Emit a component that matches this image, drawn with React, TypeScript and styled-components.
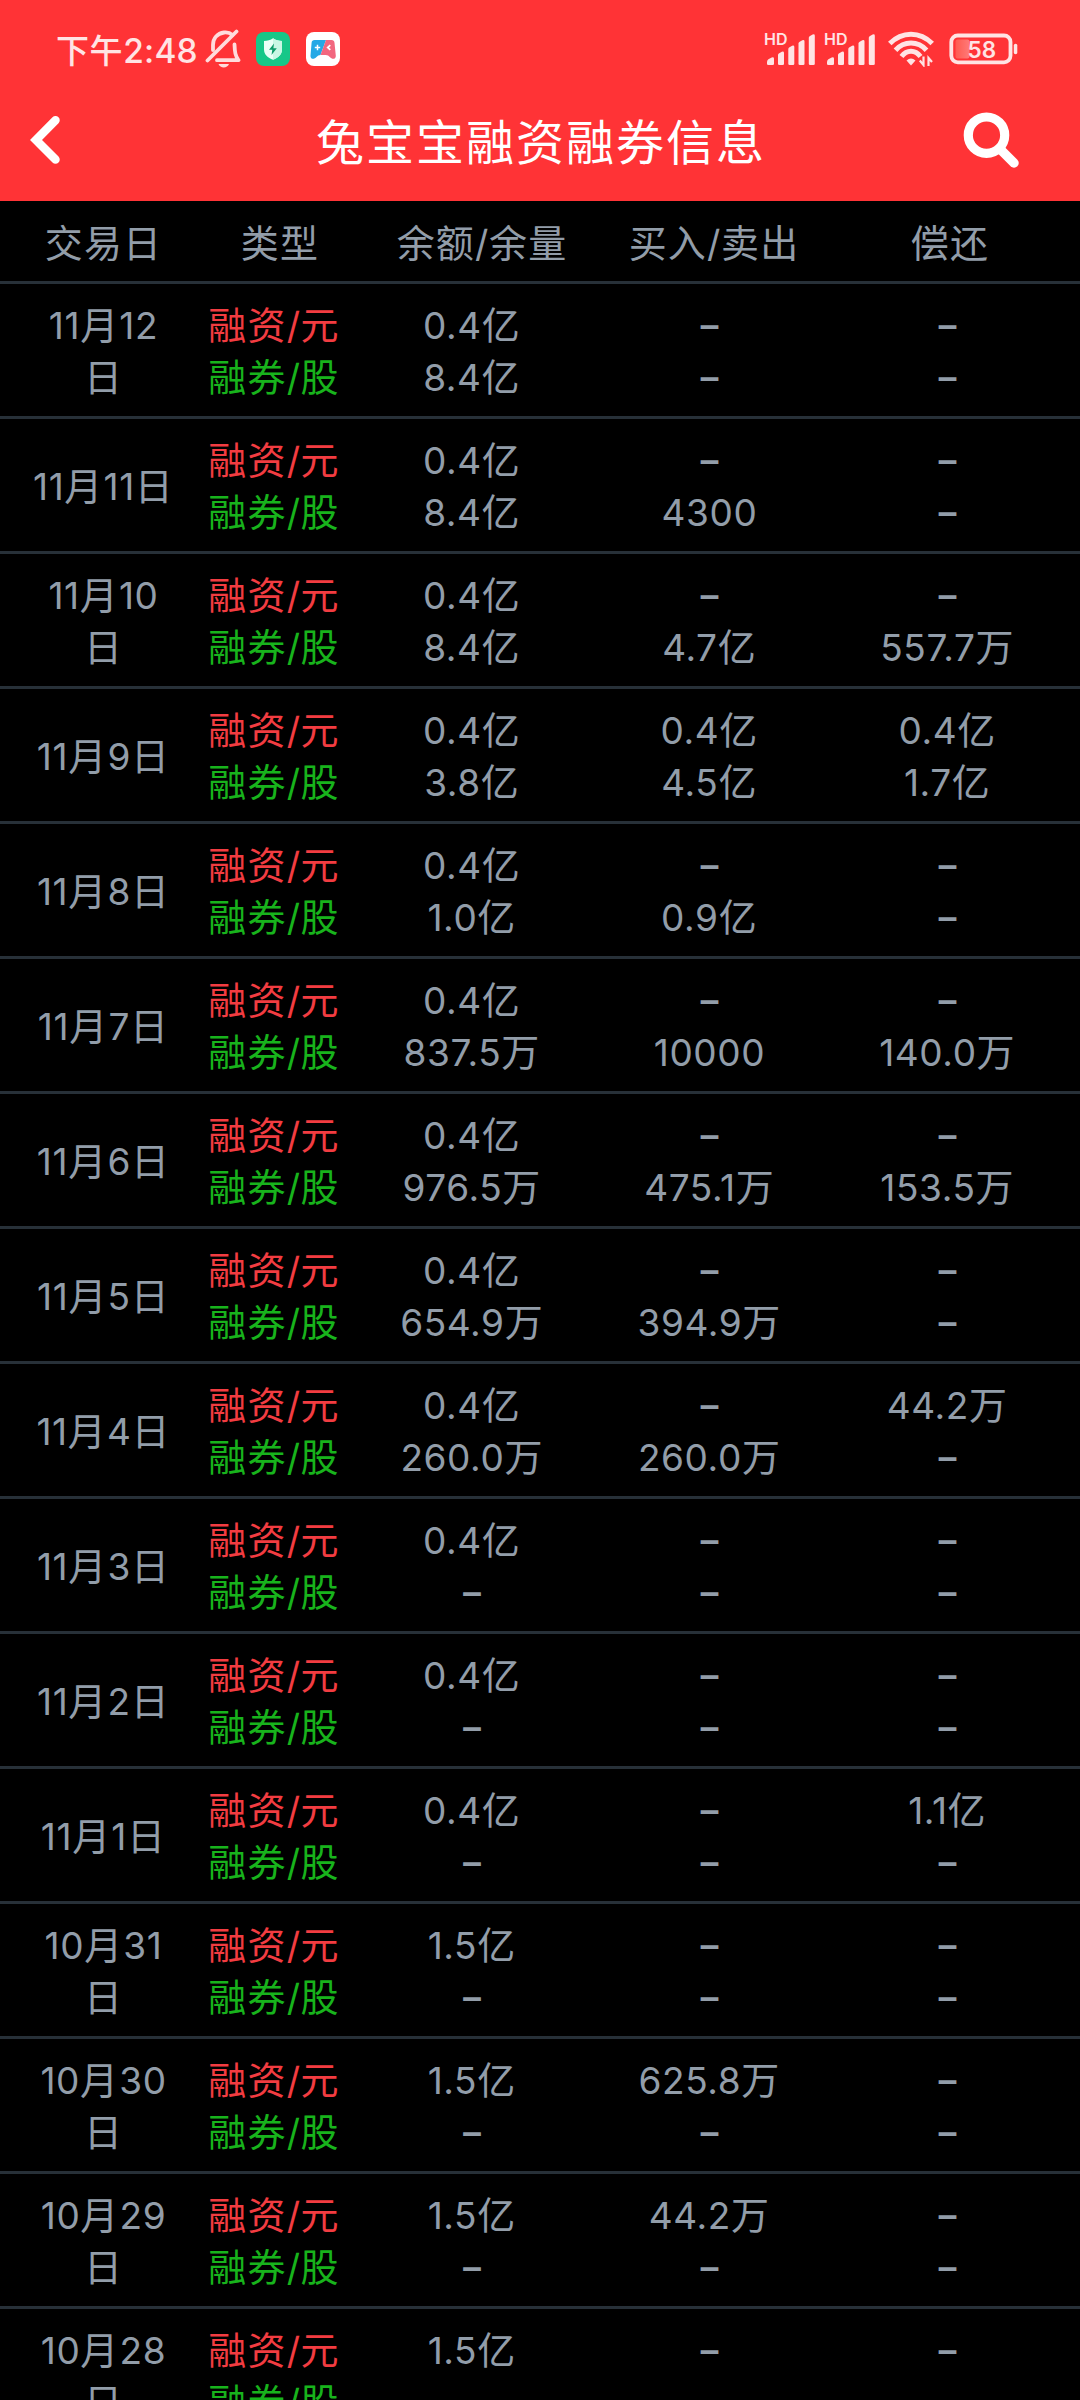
import React from "react";
import styled, { createGlobalStyle } from "styled-components";

const GlobalStyle = createGlobalStyle`
  html, body {
    margin: 0;
    padding: 0;
    background: #000;
    overflow: hidden;
  }
  * { box-sizing: border-box; }
`;

const Screen = styled.div`
  width: 1080px;
  height: 2400px;
  overflow: hidden;
  display: flex;
  flex-direction: column;
  background: #000;
  color: #929da9;
  font-family: "Noto Sans CJK SC", sans-serif;
`;

const TopArea = styled.header`
  flex: none;
  height: 201px;
  background: #ff3336;
  color: #fff;
`;

const StatusBar = styled.div`
  display: flex;
  align-items: center;
  justify-content: space-between;
  height: 98px;
  padding: 0 62px 0 56px;
`;

const StatusGroup = styled.div`
  display: flex;
  align-items: center;
`;

const Clock = styled.div`
  width: 149px;
  padding-bottom: 1px;
  color: #ffe4e4;
  font-size: 33px;
  line-height: 48px;
  font-weight: 500;
  white-space: nowrap;
  letter-spacing: 0.6px;
`;

const Glyph = styled.svg<{ $gap?: number }>`
  display: block;
  flex: none;
  margin-left: ${(p) => p.$gap ?? 0}px;
`;

const SignalLabel = styled.text`
  font-family: Inter, sans-serif;
  font-size: 16px;
  font-weight: 600;
`;

const BatteryLabel = styled.text`
  font-family: Inter, sans-serif;
  font-size: 22.5px;
  font-weight: 600;
`;

const TitleBar = styled.div`
  display: grid;
  grid-template-columns: 120px 1fr 120px;
  align-items: center;
  height: 84px;
`;

const Title = styled.h1`
  margin: 0;
  padding: 0 0 3px 2px;
  font-size: 48px;
  line-height: 70px;
  font-weight: 400;
  letter-spacing: 2px;
  text-align: center;
  white-space: nowrap;
`;

const IconButton = styled.button<{ $left: number }>`
  display: flex;
  padding: 0 0 0 ${(p) => p.$left}px;
  border: 0;
  background: none;
`;

const HeaderRow = styled.div`
  flex: none;
  display: grid;
  grid-template-columns: 175px 178px 226px 238px 234px;
  align-items: center;
  height: 83px;
  padding: 0 13px 1px 16px;
  border-bottom: 3px solid #273038;
`;

const HeaderCell = styled.div`
  font-size: 38px;
  line-height: 52px;
  letter-spacing: 1.2px;
  text-align: center;
  white-space: nowrap;
`;

const Row = styled.div`
  flex: none;
  display: grid;
  grid-template-columns: 175px 166px 230px 245px 231px;
  align-items: center;
  height: 135px;
  padding: 0 15px 2px 16px;
  border-bottom: 3px solid #273038;
`;

const Cell = styled.div`
  display: flex;
  flex-direction: column;
  align-items: center;
`;

const Line = styled.div<{ $color?: string }>`
  height: 52px;
  font-size: 38px;
  line-height: 52px;
  letter-spacing: 1.2px;
  white-space: nowrap;
  color: ${(p) => p.$color ?? "inherit"};
`;

const Digits = styled.span<{ $size: number }>`
  font-family: Inter, sans-serif;
  font-size: ${(p) => p.$size}px;
  line-height: 1;
  letter-spacing: 0.6px;
`;

const ClockDigits = styled(Digits)`
  letter-spacing: 0.2px;
`;

const Dash = styled.span`
  display: block;
  font-family: "Noto Sans", sans-serif;
  font-size: 42px;
  line-height: 49px;
  font-weight: 500;
  letter-spacing: 0;
`;

type Pair = [string, string];
type Record = { date: string[]; balance: Pair; buy: Pair; repay: Pair };

const records: Record[] = [
  { date: ["11月12", "日"], balance: ["0.4亿", "8.4亿"], buy: ["–", "–"], repay: ["–", "–"] },
  { date: ["11月11日"], balance: ["0.4亿", "8.4亿"], buy: ["–", "4300"], repay: ["–", "–"] },
  { date: ["11月10", "日"], balance: ["0.4亿", "8.4亿"], buy: ["–", "4.7亿"], repay: ["–", "557.7万"] },
  { date: ["11月9日"], balance: ["0.4亿", "3.8亿"], buy: ["0.4亿", "4.5亿"], repay: ["0.4亿", "1.7亿"] },
  { date: ["11月8日"], balance: ["0.4亿", "1.0亿"], buy: ["–", "0.9亿"], repay: ["–", "–"] },
  { date: ["11月7日"], balance: ["0.4亿", "837.5万"], buy: ["–", "10000"], repay: ["–", "140.0万"] },
  { date: ["11月6日"], balance: ["0.4亿", "976.5万"], buy: ["–", "475.1万"], repay: ["–", "153.5万"] },
  { date: ["11月5日"], balance: ["0.4亿", "654.9万"], buy: ["–", "394.9万"], repay: ["–", "–"] },
  { date: ["11月4日"], balance: ["0.4亿", "260.0万"], buy: ["–", "260.0万"], repay: ["44.2万", "–"] },
  { date: ["11月3日"], balance: ["0.4亿", "–"], buy: ["–", "–"], repay: ["–", "–"] },
  { date: ["11月2日"], balance: ["0.4亿", "–"], buy: ["–", "–"], repay: ["–", "–"] },
  { date: ["11月1日"], balance: ["0.4亿", "–"], buy: ["–", "–"], repay: ["1.1亿", "–"] },
  { date: ["10月31", "日"], balance: ["1.5亿", "–"], buy: ["–", "–"], repay: ["–", "–"] },
  { date: ["10月30", "日"], balance: ["1.5亿", "–"], buy: ["625.8万", "–"], repay: ["–", "–"] },
  { date: ["10月29", "日"], balance: ["1.5亿", "–"], buy: ["44.2万", "–"], repay: ["–", "–"] },
  { date: ["10月28", "日"], balance: ["1.5亿", "–"], buy: ["–", "–"], repay: ["–", "–"] },
];

/** Sets figures in the Latin face and leaves the Chinese characters in the base face. */
function Mixed({ text, size = 37 }: { text: string; size?: number }) {
  return (
    <>
      {text.split(/([\d.:/]+)/).map((part, i) =>
        /^[\d.:/]+$/.test(part) ? (
          <Digits key={i} $size={size}>{part}</Digits>
        ) : (
          part
        )
      )}
    </>
  );
}

function Value({ text }: { text: string }) {
  return <Line>{text === "–" ? <Dash>–</Dash> : <Mixed text={text} />}</Line>;
}

function Values({ pair }: { pair: Pair }) {
  return (
    <Cell>
      <Value text={pair[0]} />
      <Value text={pair[1]} />
    </Cell>
  );
}

function MutedBell() {
  return (
    <Glyph width="36" height="40" viewBox="205 30 36 40" fill="none" stroke="#ffdcdc" strokeWidth="3.8" strokeLinecap="round" strokeLinejoin="round">
      <path d="M213 51V46c0-7 4.500-11.500 11-12.500 3.500-.5 6.500.8 8.500 2.500" />
      <path d="M234.500 45.500c.3 8 .8 11 4 15.700H217" />
      <path d="M236.500 32.500 207.500 61.500" />
      <path d="M218.500 65h10.500c-1.500 4.500-9 4.500-10.500 0Z" fill="#ffdcdc" stroke="none" />
    </Glyph>
  );
}

function SecurityIcon() {
  return (
    <Glyph width="34" height="34" viewBox="0 0 34 34" $gap={15}>
      <rect width="34" height="34" rx="8" fill="#17c788" />
      <path d="M17 6.200c2.500 1.800 5.500 2.500 9 2.700v8.600c0 5-3.800 8.300-9 10.300-5.200-2-9-5.300-9-10.300V8.900c3.500-.2 6.500-.9 9-2.700Z" fill="#eafff6" />
      <path d="M17 6.200c2.500 1.800 5.500 2.500 9 2.700v8.600c0 5-3.800 8.300-9 10.300Z" fill="#c9f7e4" />
      <path d="m18 11.500-5 6.300h3.300L15.500 23l5.300-6.800h-3.400Z" fill="#0d9c69" />
    </Glyph>
  );
}

function GameIcon() {
  return (
    <Glyph width="34" height="34" viewBox="0 0 34 34" $gap={16}>
      <rect width="34" height="34" rx="8" fill="#fff" />
      <path d="M8.500 8H20l-5.500 15q-2.500 0-4 2c-2.300 2.800-6.300 2.300-6-1.300L5.600 10.800C5.800 9 6.800 8 8.500 8Z" fill="#25a9e6" />
      <path d="M20 8h5.600c1.700 0 2.700 1 2.900 2.800l1.300 12.900c.3 3.600-3.700 4.100-6 1.300q-1.500-2-4-2h-5.300Z" fill="#f2677f" />
      <path d="M11.500 12.800v5.400M8.800 15.500h5.400" stroke="#fff" strokeWidth="1.500" />
      <path d="m24.300 13.200-2.600 2.300 2.600 2.300" fill="none" stroke="#fff" strokeWidth="1.700" />
    </Glyph>
  );
}

function Signal({ gap }: { gap: number }) {
  return (
    <Glyph width="52" height="36" viewBox="764 31 52 36" fill="#ffe4e4" $gap={gap}>
      <SignalLabel x="764" y="45">HD</SignalLabel>
      <path d="M767 62q0-1.700 1.400-2.700l3.300-1.800q2.300-.6 2.300 1.200v5q0 1.300-1.300 1.300h-4.400q-1.300 0-1.300-1.300Z" />
      <path d="M778 55q0-1 .8-1.500l3-1.800q2.200-.6 2.200 1.200v10.800q0 1.300-1.300 1.300h-3.400q-1.300 0-1.300-1.300Z" />
      <path d="M788.300 49q0-1 .8-1.500l3-1.800q2.200-.6 2.200 1.200v16.800q0 1.300-1.300 1.300h-3.400q-1.300 0-1.300-1.300Z" />
      <path d="M798.500 43.500q0-1 .8-1.500l3-1.800q2.200-.6 2.200 1.200v22.300q0 1.300-1.300 1.300h-3.400q-1.300 0-1.300-1.300Z" />
      <path d="M808.800 37.800q0-1 .8-1.500l3-1.800q2.200-.6 2.200 1.200v28q0 1.300-1.300 1.300h-3.400q-1.300 0-1.300-1.300Z" />
    </Glyph>
  );
}

function Wifi() {
  return (
    <Glyph width="48" height="36" viewBox="887 32 48 36" fill="none" stroke="#ffe4e4" strokeWidth="5" $gap={11}>
      <path d="M889.800 44.500Q899 35.200 911 35.200T932.200 44.500" />
      <path d="M895.500 51.200Q902 44 911 44T926.500 51.200" />
      <path d="M901.500 57.500Q905.500 52.300 911 52.300T920.500 57.500" />
      <path d="M906.500 61.500q4.500-4 9 0l-4.500 5Z" fill="#ffe4e4" stroke="none" />
      <path d="M923.500 57.500V66l-3.700-4.500M928.500 67V59l3.500 4" strokeWidth="2.200" />
    </Glyph>
  );
}

function Battery() {
  return (
    <Glyph width="69" height="32" viewBox="948.500 33 69 32" $gap={14}>
      <defs>
        <linearGradient id="charge" x1="0" x2="1">
          <stop offset="0" stopColor="#ff5a50" />
          <stop offset="1" stopColor="#ff7a78" />
        </linearGradient>
      </defs>
      <rect x="955" y="39.500" width="14" height="19" rx="2" fill="url(#charge)" />
      <rect x="950.800" y="35.500" width="59.200" height="26.800" rx="6.500" fill="none" stroke="#ffe4e4" strokeWidth="3.800" />
      <rect x="1013.300" y="43.700" width="3.500" height="10.500" rx="1.700" fill="#ffe4e4" />
      <BatteryLabel x="967" y="58" fill="#ffe4e4">58</BatteryLabel>
    </Glyph>
  );
}

export default function App() {
  return (
    <>
      <GlobalStyle />
      <Screen>
        <TopArea>
          <StatusBar>
            <StatusGroup>
              <Clock>下午<ClockDigits $size={33.5}>2:48</ClockDigits></Clock>
              <MutedBell />
              <SecurityIcon />
              <GameIcon />
            </StatusGroup>
            <StatusGroup>
              <Signal gap={0} />
              <Signal gap={8} />
              <Wifi />
              <Battery />
            </StatusGroup>
          </StatusBar>
          <TitleBar>
            <IconButton $left={30} aria-label="返回">
              <Glyph width="32" height="50" viewBox="30 115.500 32 50" fill="none" stroke="#fff" strokeWidth="8.500" strokeLinecap="round">
                <path d="M55.500 120.800 36 140.500 55.500 160" />
              </Glyph>
            </IconButton>
            <Title>兔宝宝融资融券信息</Title>
            <IconButton $left={2} aria-label="搜索">
              <Glyph width="58" height="58" viewBox="962 111 58 58" fill="none" stroke="#fff" strokeLinecap="round">
                <circle cx="986.500" cy="135.200" r="18.200" strokeWidth="9.200" />
                <path d="m1001 150 13 13" strokeWidth="9.500" />
              </Glyph>
            </IconButton>
          </TitleBar>
        </TopArea>
        <HeaderRow>
          <HeaderCell>交易日</HeaderCell>
          <HeaderCell>类型</HeaderCell>
          <HeaderCell><Mixed text="余额/余量" /></HeaderCell>
          <HeaderCell><Mixed text="买入/卖出" /></HeaderCell>
          <HeaderCell>偿还</HeaderCell>
        </HeaderRow>
        {records.map((r) => (
          <Row key={r.date[0]}>
            <Cell>
              {r.date.map((part) => (
                <Line key={part}><Mixed text={part} /></Line>
              ))}
            </Cell>
            <Cell>
              <Line $color="#f23c41"><Mixed text="融资/元" /></Line>
              <Line $color="#18b31c"><Mixed text="融券/股" /></Line>
            </Cell>
            <Values pair={r.balance} />
            <Values pair={r.buy} />
            <Values pair={r.repay} />
          </Row>
        ))}
      </Screen>
    </>
  );
}
